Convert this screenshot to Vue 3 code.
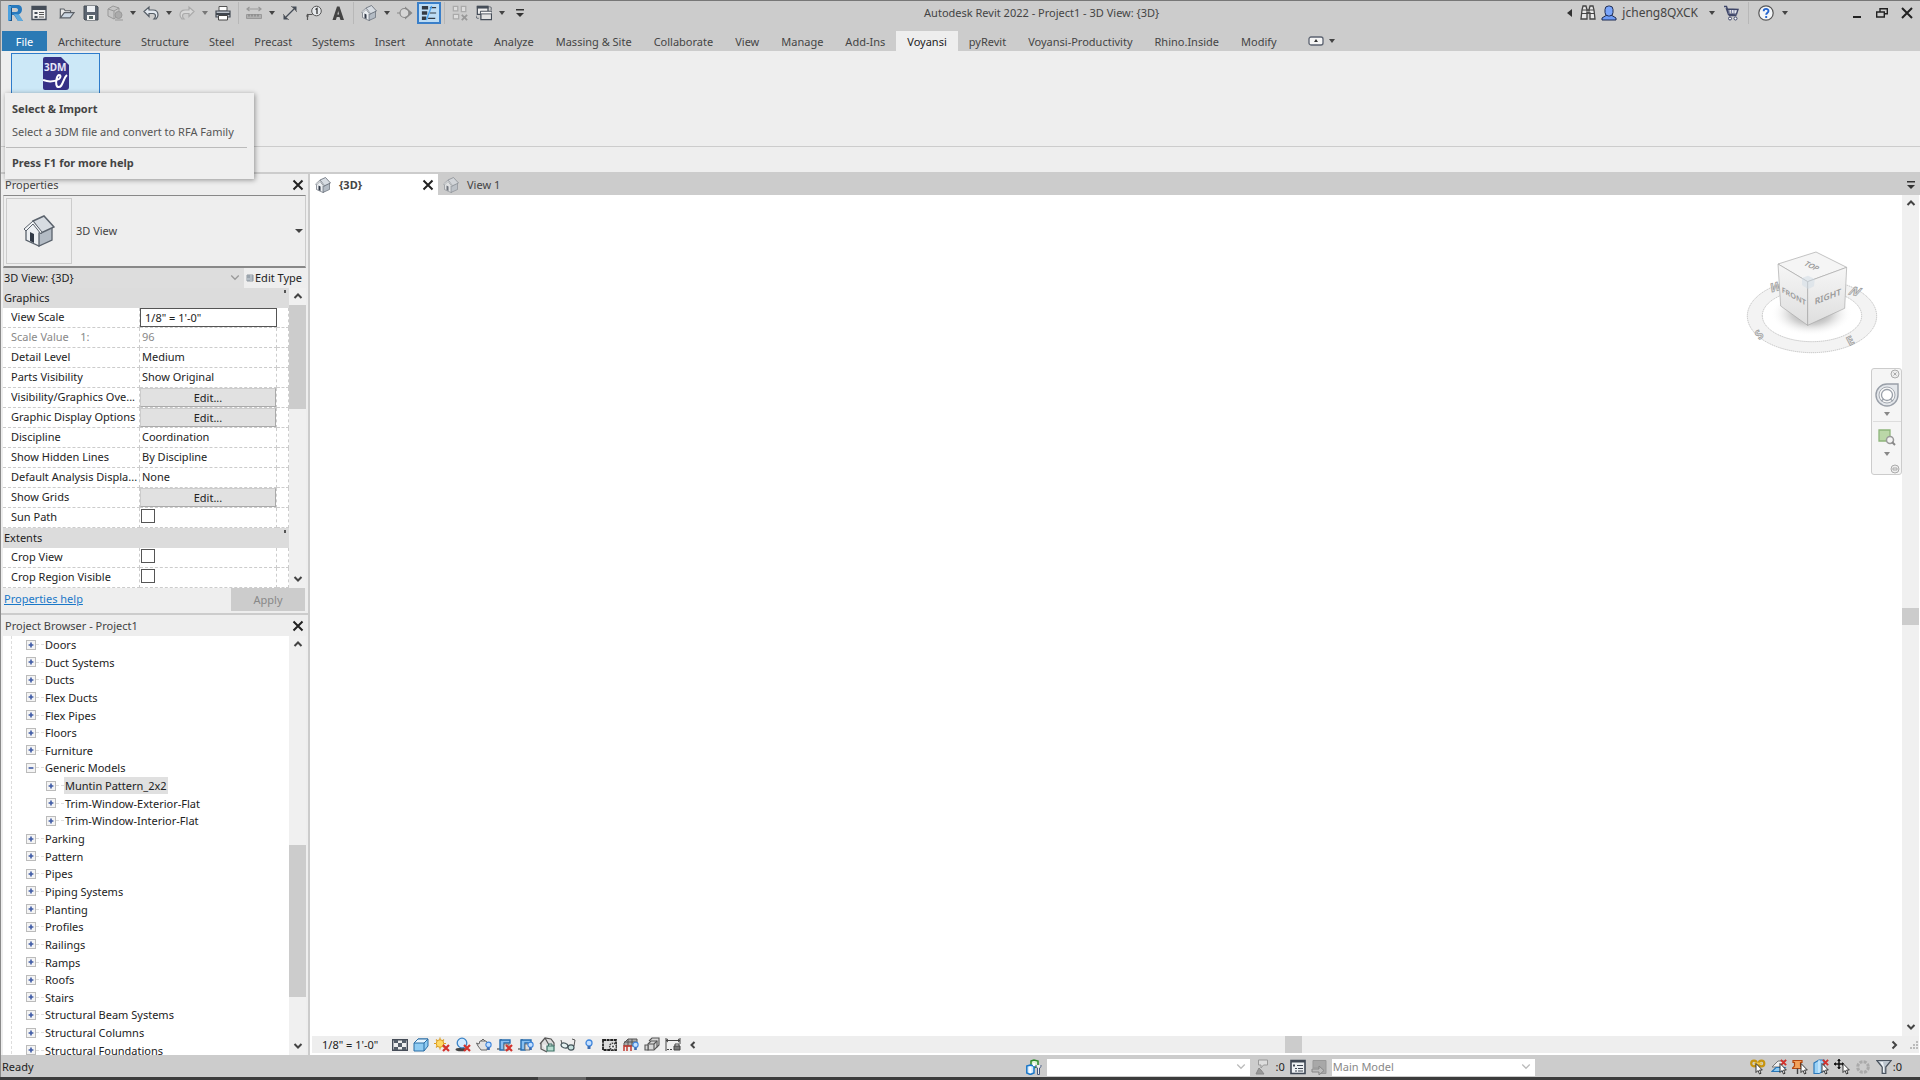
<script setup>
import { ref } from 'vue'

const activeTab = ref('Voyansi')
const instance = ref('3D View: {3D}')
const workset = ref('')
const option = ref('Main Model')
const selectedNode = ref('Muntin Pattern_2x2')

const tabs = [
  'Architecture', 'Structure', 'Steel', 'Precast', 'Systems', 'Insert', 'Annotate', 'Analyze',
  'Massing & Site', 'Collaborate', 'View', 'Manage', 'Add-Ins', 'Voyansi', 'pyRevit',
  'Voyansi-Productivity', 'Rhino.Inside', 'Modify'
]

const groups = ref([
  {
    name: 'Graphics',
    rows: [
      { id: 'scale', label: 'View Scale', type: 'input', value: '1/8" = 1\'-0"' },
      { id: 'scale-value', label: 'Scale Value    1:', type: 'text', value: '96', muted: true },
      { id: 'detail', label: 'Detail Level', type: 'text', value: 'Medium' },
      { id: 'parts', label: 'Parts Visibility', type: 'text', value: 'Show Original' },
      { id: 'vg', label: 'Visibility/Graphics Ove...', type: 'button', value: 'Edit...' },
      { id: 'gdo', label: 'Graphic Display Options', type: 'button', value: 'Edit...' },
      { id: 'discipline', label: 'Discipline', type: 'text', value: 'Coordination' },
      { id: 'hidden', label: 'Show Hidden Lines', type: 'text', value: 'By Discipline' },
      { id: 'analysis', label: 'Default Analysis Displa...', type: 'text', value: 'None' },
      { id: 'grids', label: 'Show Grids', type: 'button', value: 'Edit...' },
      { id: 'sun', label: 'Sun Path', type: 'check', value: false }
    ]
  },
  {
    name: 'Extents',
    rows: [
      { id: 'crop', label: 'Crop View', type: 'check', value: false },
      { id: 'crop-region', label: 'Crop Region Visible', type: 'check', value: false }
    ]
  }
])

const tree = [
  { name: 'Doors' }, { name: 'Duct Systems' }, { name: 'Ducts' }, { name: 'Flex Ducts' },
  { name: 'Flex Pipes' }, { name: 'Floors' }, { name: 'Furniture' },
  { name: 'Generic Models', open: true },
  { name: 'Muntin Pattern_2x2', child: true },
  { name: 'Trim-Window-Exterior-Flat', child: true },
  { name: 'Trim-Window-Interior-Flat', child: true },
  { name: 'Parking' }, { name: 'Pattern' }, { name: 'Pipes' }, { name: 'Piping Systems' },
  { name: 'Planting' }, { name: 'Profiles' }, { name: 'Railings' }, { name: 'Ramps' },
  { name: 'Roofs' }, { name: 'Stairs' }, { name: 'Structural Beam Systems' },
  { name: 'Structural Columns' }, { name: 'Structural Foundations' }
]

const quickTools = [
  'revit', 'recent', 'gap', 'open', 'save', 'sync', 'drop', 'undo', 'drop', 'redo', 'drop-dim', 'print', 'sep',
  'measure', 'drop', 'dimension', 'tag', 'text', 'sep', 'house', 'drop', 'section', 'thin', 'sep',
  'close-hidden', 'switch', 'drop', 'customize'
]
const viewTools = [
  'detail', 'style', 'sun', 'shadow', 'render', 'crop-off', 'crop-show', 'lock', 'glasses', 'bulb',
  'properties', 'analytic', 'displace', 'constraint'
]
const selectTools = ['sel-link', 'sel-underlay', 'sel-pin', 'sel-face', 'sel-drag', 'busy', 'filter']
</script>

<template>
  <svg class="defs" aria-hidden="true">
    <defs>
      <linearGradient id="cubeShade" x1="0" y1="0" x2="0" y2="1">
        <stop offset="0" stop-color="#f6f6f6" /><stop offset="1" stop-color="#dedede" />
      </linearGradient>
      <radialGradient id="floorShade">
        <stop offset="0" stop-color="#777" stop-opacity=".9" /><stop offset=".5" stop-color="#aaa" stop-opacity=".55" /><stop offset="1" stop-color="#fff" stop-opacity="0" />
      </radialGradient>
      <symbol id="cursor" viewBox="0 0 8 12"><path d="M1 .5v9l2-2 1.500 3.500 1.500-.7L4.600 7H7.300z" fill="#fff" stroke="#222" stroke-width=".9" /></symbol>
      <symbol id="redx" viewBox="0 0 8 8"><path d="M1 1l6 6M7 1L1 7" stroke="#d3322c" stroke-width="2.200" /></symbol>
      <symbol id="blueBulb" viewBox="0 0 8 12"><circle cx="4" cy="4" r="3" fill="#c4e0ff" stroke="#3f86dd" stroke-width="1.300" /><path d="M2.500 7h3v3h-3z" fill="#3a6bb0" /></symbol>

      <symbol id="i-revit" viewBox="0 0 16 18"><path d="M2 1h3v16H2z" fill="#174f86" /><path d="M4 1h6c4 0 5 2 5 4.500S13.500 10 11.500 10.500L16 17h-5L7 11H5V8h4c1.500 0 2-1 2-2s-.8-2-2-2H4z" fill="#2879bd" /><path d="M1 1l3 1v14l-3 1z" fill="#4aa0df" /><path d="M7 10l5 .5L16 17h-5z" fill="#5ea9dc" /></symbol>
      <symbol id="i-recent" viewBox="0 0 16 16"><path d="M1 1.500h14v13H1z" fill="#f2f2f2" stroke="#454d58" stroke-width="1.300" /><path d="M1 1h14v4H1z" fill="#454d58" /><path d="M3.500 7h3v2h-3zM3.500 11h3v2h-3z" fill="#454d58" /><path d="M8 7.500h5M8 9.500h5M8 12h5" stroke="#555" /></symbol>
      <symbol id="i-open" viewBox="0 0 18 16"><path d="M1.500 13.500V3.500h4l1.500 2h6v3" fill="#e9e9e9" stroke="#5b6067" stroke-width="1.300" /><path d="M1.500 13.500L6 7.500h11l-4.500 6z" fill="#ccd7e3" stroke="#5b6067" stroke-width="1.300" /></symbol>
      <symbol id="i-save" viewBox="0 0 16 16"><path d="M1 1h13l1 1v13H2l-1-1z" fill="#5b6470" stroke="#454c55" /><path d="M4 1h8v6H4z" fill="#edf0f3" /><path d="M4 10h8v5H4z" fill="#f7f7f7" /><path d="M6 11h4v3H6z" fill="#566" /></symbol>
      <symbol id="i-sync" viewBox="0 0 16 16"><g stroke="#999" fill="#c6c6c6"><path d="M1 4l5-3 6 2v7l-5 4-6-3z" /><path d="M1 4l6 2 5-3M7 6v8" fill="none" /><circle cx="11.500" cy="10" r="3.500" fill="#ababab" /><path d="M8 15h8" /></g></symbol>
      <symbol id="i-undo" viewBox="0 0 16 16"><path d="M1 6.500L6 2v3h4c4 0 5 3 5 5s-1 3-2 4h-2c1-1 1.500-2 1.500-3S12 8.500 10 8.500H6v3z" fill="#e4eaf1" stroke="#555d66" stroke-width="1.200" /></symbol>
      <symbol id="i-redo" viewBox="0 0 16 16"><path d="M15 6.500L10 2v3H6c-4 0-5 3-5 5s1 3 2 4h2c-1-1-1.500-2-1.500-3S4 8.500 6 8.500h4v3z" fill="#d8d8d8" stroke="#aaa" stroke-width="1.200" /></symbol>
      <symbol id="i-print" viewBox="0 0 16 16"><path d="M4 1.500h8V6H4z" fill="#fff" stroke="#555" /><path d="M1 6h14v6H1z" fill="#b8bec6" stroke="#444b54" stroke-width="1.200" /><path d="M1 9h14" stroke="#3f454d" stroke-width="2" /><path d="M3.500 10.500h9v4.500h-9z" fill="#fff" stroke="#444" /></symbol>
      <symbol id="i-measure" viewBox="0 0 16 16"><path d="M1 4h14M3.500 2L1 4l2.500 2M12.500 2L15 4l-2.500 2" fill="none" stroke="#999" stroke-width="1.200" /><path d="M.5 9.500h15v4H.5z" fill="#b0b0b0" stroke="#999" /><path d="M3 9.500v2M6 9.500v2M9 9.500v2M12 9.500v2" stroke="#777" /></symbol>
      <symbol id="i-dimension" viewBox="0 0 16 16"><path d="M3 13L13 3" stroke="#454d58" stroke-width="1.300" /><path d="M1.500 14.500v-5l5 5zM14.500 1.500v5l-5-5z" fill="#454d58" /><path d="M1 9l6 6M9 1l6 6" stroke="#777" /></symbol>
      <symbol id="i-tag" viewBox="0 0 16 16"><path d="M1.500 15V9.500h5" fill="none" stroke="#555" stroke-width="1.200" /><path d="M0 11.500l1.500-3 1.500 3z" fill="#555" /><circle cx="10.500" cy="6" r="4.800" fill="#e6e9ec" stroke="#555" /><path d="M9.500 4.500l1.500-1V9" fill="none" stroke="#333" stroke-width="1.300" /></symbol>
      <symbol id="i-text" viewBox="0 0 16 16"><path d="M2.500 15L7 1.500h2.500L14 15h-3.500l-1-3H6.800l-1 3zM7.400 9.500h1.700L8.200 6z" fill="#444" fill-rule="evenodd" /></symbol>
      <symbol id="i-house" viewBox="0 0 32 32"><path d="M3 14l8-8 8 10v13l-3 2-13-6z" fill="#eceff2" stroke="#5a626c" stroke-width="1.300" /><path d="M16 18l13-6v13l-13 6z" fill="#b3bbc4" stroke="#5a626c" stroke-width="1.300" /><path d="M10 6l11-5 10 11-13 6z" fill="#d7dce2" stroke="#5a626c" stroke-width="1.500" /><path d="M10 6L1 14l2 2 7-7 8 10 1-2z" fill="#f3f5f7" stroke="#5a626c" /><path d="M7 17l4 2v9l-4-2z" fill="#313946" /></symbol>
      <symbol id="i-section" viewBox="0 0 16 16"><circle cx="7.500" cy="8" r="4.500" fill="#d6d6d6" stroke="#888" stroke-width="1.200" /><path d="M8 1.500L15.500 8 8 14.500V12c5-2 5-6 0-8z" fill="#888" /><path d="M0 8h3" stroke="#888" /></symbol>
      <symbol id="i-thin" viewBox="0 0 18 18"><path d="M1 3h7M1 9h6M1 15h5" stroke="#323a44" stroke-width="4" /><path d="M10 3h7M10 9h7M8 15h8" stroke="#323a44" stroke-width="1.300" /><path d="M12 1L6 17" stroke="#4ba3f0" stroke-width="1.600" /></symbol>
      <symbol id="i-close-hidden" viewBox="0 0 18 18"><path d="M1.500 1.500h5v5h-5zM10.500 1.500h5v6h-5zM1.500 10.500h6v5h-6z" fill="#ddd" stroke="#aaa" stroke-width="1.400" /><path d="M11 11l6 6M17 11l-6 6" stroke="#999" stroke-width="2" /></symbol>
      <symbol id="i-switch" viewBox="0 0 18 18"><path d="M1.500 1.500h12v9h-12z" fill="#eee" stroke="#454d58" stroke-width="1.400" /><path d="M1 1h13v3H1z" fill="#454d58" /><path d="M5.500 7.500h12v9h-12z" fill="#e2e2e2" stroke="#454d58" stroke-width="1.400" /><path d="M5 7h13v3H5z" fill="#f7f7f7" stroke="#454d58" /><path d="M15 2c3 0 2 2 2 4M0 12c0 3 1 3 3 3" fill="none" stroke="#454d58" /></symbol>
      <symbol id="i-customize" viewBox="0 0 10 10"><path d="M1 1h8v1.500H1zM1 5h8L5 9z" fill="#333" /></symbol>

      <symbol id="i-detail" viewBox="0 0 16 14"><path d="M.7 1.700h14.600v10.600H.7z" fill="#eee" stroke="#454c57" stroke-width="1.400" /><path d="M2 2h4v3H2zM10 2h4v3h-4zM6 5h4v4H6zM2 9h4v3H2zM10 9h4v3h-4z" fill="#545d68" /></symbol>
      <symbol id="i-style" viewBox="0 0 16 16"><path d="M1 6l4-4h10v7l-4 5H1z" fill="#8fccf3" stroke="#2a6ea6" /><path d="M1 6l4-4h10l-4 4z" fill="#e6f5ff" stroke="#2a6ea6" /><path d="M11 6v8" stroke="#2a6ea6" /></symbol>
      <symbol id="i-sun" viewBox="0 0 16 16"><path d="M6 .5v12M0 6.500h12M2 2.500l8 8M10 2.500l-8 8" stroke="#db9c22" stroke-width="1.100" /><circle cx="6" cy="6.500" r="3.800" fill="#ffd964" stroke="#db9c22" /><use href="#redx" x="8" y="7" width="8" height="8" /></symbol>
      <symbol id="i-shadow" viewBox="0 0 16 16"><ellipse cx="6" cy="12.500" rx="5.500" ry="1.800" fill="#444" /><circle cx="7" cy="6" r="4.800" fill="#d2eaff" stroke="#3b83c6" stroke-width="1.300" /><use href="#redx" x="8" y="7" width="8" height="8" /></symbol>
      <symbol id="i-render" viewBox="0 0 16 16"><path d="M4 4h6l2 3-1 6H5L2 9 .5 6 3 7z" fill="#e2e2e2" stroke="#666" /><path d="M5 4l2-2 2 2" fill="none" stroke="#666" /><use href="#blueBulb" x="9" y="4" width="7" height="11" /></symbol>
      <symbol id="i-crop-off" viewBox="0 0 16 16"><path d="M0 12h4M4 2v2" fill="none" stroke="#333" /><path d="M3 3h10v3H7v7H3z" fill="#88bff0" stroke="#246cb0" stroke-width="1.400" /><path d="M7 7h5v6H7z" fill="#ddd" stroke="#777" /><use href="#redx" x="8" y="7" width="8" height="8" /></symbol>
      <symbol id="i-crop-show" viewBox="0 0 16 16"><path d="M0 12h4M4 2v2" fill="none" stroke="#333" /><path d="M3 3h10v3H7v7H3z" fill="#88bff0" stroke="#246cb0" stroke-width="1.400" /><path d="M7 7h5v6H7z" fill="#ddd" stroke="#777" /><use href="#blueBulb" x="9" y="4" width="7" height="11" /></symbol>
      <symbol id="i-lock" viewBox="0 0 16 16"><path d="M1 7l5-6 6 1 3 4v3M2 6v6l6 3M6 1l4 7" fill="#ddd" stroke="#555" stroke-width="1.200" /><path d="M8 9h7v5H8z" fill="#b7ddd0" stroke="#3b7064" stroke-width="1.200" /><path d="M9.500 9V7h3.500v2" fill="none" stroke="#3b7064" /></symbol>
      <symbol id="i-glasses" viewBox="0 0 16 16"><path d="M1 3l1 4M12 2l3 1-1 6" fill="none" stroke="#555" /><ellipse cx="4.500" cy="8.500" rx="3.500" ry="2.400" fill="#e5f1f1" stroke="#45545a" stroke-width="1.200" transform="rotate(20 4.500 8.500)" /><ellipse cx="11" cy="10.500" rx="3" ry="2.600" fill="#c8e2e0" stroke="#45545a" stroke-width="1.200" /></symbol>
      <symbol id="i-bulb" viewBox="0 0 16 16"><use href="#blueBulb" x="4" y="2" width="8" height="12" /></symbol>
      <symbol id="i-properties" viewBox="0 0 16 16"><path d="M1 3h13v10H1z" fill="#ddd" stroke="#222" stroke-width="1.800" stroke-dasharray="3 .6" /><circle cx="11" cy="9.500" r="3.300" fill="#eee" stroke="#444" stroke-width="1.500" stroke-dasharray="1.500 .8" /><circle cx="11" cy="9.500" r="1" fill="#444" /></symbol>
      <symbol id="i-analytic" viewBox="0 0 16 16"><path d="M1 6l4-4h9v4l-3 3H1z" fill="#aaa" stroke="#555" /><path d="M1 5h12M5 2v7M9 2v7" stroke="#555" /><path d="M1 14V9h7v5M4 14V9" fill="none" stroke="#c2382f" stroke-width="1.500" /><use href="#blueBulb" x="9" y="4" width="7" height="11" /></symbol>
      <symbol id="i-displace" viewBox="0 0 16 16"><g fill="#d8d8d8" stroke="#555" stroke-width="1.100"><path d="M5 4l3-3h7v7l-2 2" /><path d="M4 7l3-3h6v6l-3 3H4z" /><path d="M4 7h6v6M10 7l3-3" /><path d="M1 8h3v5H1z" /></g></symbol>
      <symbol id="i-constraint" viewBox="0 0 16 16"><path d="M1 1v13M15 1v6M1 3.500h14M3 2L1 3.500 3 5M13 2l2 1.500L13 5" fill="none" stroke="#444" /><path d="M2 12.500h6" stroke="#444" stroke-dasharray="2 1" /><path d="M9 9h6v4H9z" fill="#777" stroke="#444" /><path d="M10 9V7h4v2" fill="none" stroke="#444" /></symbol>

      <symbol id="i-sel-link" viewBox="0 0 16 16"><circle cx="4" cy="4.500" r="2.800" fill="none" stroke="#c7940f" stroke-width="2.200" /><circle cx="11.500" cy="4.500" r="2.800" fill="none" stroke="#c7940f" stroke-width="2.200" /><path d="M4 4.500h8" stroke="#f3c845" stroke-width="1.800" /><use href="#cursor" x="5" y="4" width="8" height="12" /></symbol>
      <symbol id="i-sel-underlay" viewBox="0 0 16 16"><path d="M1 8l6-6h7l-5 6z" fill="#eee" stroke="#777" /><path d="M1 12.500l4-4h9l-4 4z" fill="#8fccf3" stroke="#2876b7" stroke-width="1.200" /><use href="#redx" x="9" y="0" width="7" height="7" /><use href="#cursor" x="8" y="4" width="8" height="12" /></symbol>
      <symbol id="i-sel-pin" viewBox="0 0 16 16"><path d="M1 1.500h9v2H8.500V7L11 9.500H0L2.500 7V3.500H1z" fill="#f2a25b" stroke="#b3470f" stroke-width="1.200" /><path d="M5.500 9.500V15" stroke="#444" stroke-width="1.400" /><use href="#cursor" x="8" y="4" width="8" height="12" /></symbol>
      <symbol id="i-sel-face" viewBox="0 0 16 16"><path d="M1 4l5-3h5v11l-5 2.500H1z" fill="#9bd2f6" stroke="#2a78ba" stroke-width="1.200" /><path d="M6 1v13" stroke="#e6f5ff" /><use href="#redx" x="9" y="0" width="7" height="7" /><use href="#cursor" x="8" y="4" width="8" height="12" /></symbol>
      <symbol id="i-sel-drag" viewBox="0 0 16 16"><path d="M5 0v10M0 5h10" stroke="#111" stroke-width="1.500" /><path d="M3 2l2-2 2 2zM3 8l2 2 2-2zM2 3L0 5l2 2zM8 3l2 2-2 2z" fill="#111" /><use href="#cursor" x="8" y="4" width="8" height="12" /></symbol>
      <symbol id="i-busy" viewBox="0 0 16 16"><circle cx="8" cy="8" r="5.300" fill="none" stroke="#aaa" stroke-width="3" stroke-dasharray="3 1.160" /></symbol>
      <symbol id="i-filter" viewBox="0 0 16 16"><path d="M.8 1.500h14.400L9.800 8v6.500H6.200V8z" fill="#bcc5ce" stroke="#49525d" stroke-width="1.200" /><path d="M4 3h3l1 5v5H7V8z" fill="#eef2f6" /></symbol>
      <symbol id="i-worksets" viewBox="0 0 16 16"><path d="M5 2l3-1 4 1v5l-4 2-3-2z" fill="#dff3d8" stroke="#2d8a2a" stroke-width="1.500" /><path d="M.8 7l3.500-1L8 7v7l-3.700 1.500L.8 14z" fill="#cfe9ff" stroke="#1d78c8" stroke-width="1.500" /><path d="M4.300 8v6M8 4v3" stroke="#fff" stroke-width="2" /><path d="M10 6c0 2 .5 3 1.500 3v6.500h2V9C14.500 9 15 8 15 6" fill="#eee" stroke="#465a80" /></symbol>
      <symbol id="i-editreq" viewBox="0 0 16 16"><path d="M3.500 1h9v5h-4L6 9V6H3.500z" fill="#ddd" stroke="#999" /><path d="M1 15l2-4 1-2 2 2 3 4z" fill="#999" stroke="#888" /></symbol>
      <symbol id="i-options" viewBox="0 0 16 16"><path d="M1 1.500h14v13H1z" fill="#eef1f4" stroke="#3f4855" stroke-width="1.600" /><path d="M1 1h14v2.500H1z" fill="#3f4855" /><path d="M3 5.500h2v2H3zM5 9h2v1H5zM5 11.500h2v1H5zM7 6h6v1H7zM8 9h5v1H8zM8 11.500h5v1H8z" fill="#3f4855" /></symbol>
      <symbol id="i-addset" viewBox="0 0 16 16"><path d="M2 1.500h13v13H8V9H2z" fill="#a8a8a8" stroke="#999" /><path d="M1 10h7V7l5 4.500L8 16v-3H1z" fill="#bdbdbd" stroke="#888" /></symbol>
    </defs>
  </svg>

  <div class="app">
    <header class="titlebar">
      <div class="quick">
        <template v-for="(tool, i) in quickTools" :key="i">
          <span v-if="tool === 'sep'" class="sep"></span>
          <span v-else-if="tool === 'gap'" class="gap"></span>
          <button v-else-if="tool.startsWith('drop')" class="drop" :class="{ dim: tool === 'drop-dim' }" aria-label="More"></button>
          <button v-else class="tool" :class="{ on: tool === 'thin' }" :aria-label="tool">
            <svg :class="{ small: tool === 'customize', large: tool === 'revit' }"><use :href="'#i-' + tool" /></svg>
          </button>
        </template>
      </div>
      <div class="title">Autodesk Revit 2022 - Project1 - 3D View: {3D}</div>
      <div class="account">
        <button class="back" aria-label="Collapse"></button>
        <button class="tool" aria-label="Search">
          <svg viewBox="0 0 16 16"><path d="M2 5l1-4h3l1 4h2l1-4h3l1 4 1 9h-5V8H7v6H1z" fill="#e8e8e8" stroke="#444" stroke-width="1.300" /><path d="M1.500 8.500H7M9.500 8.500H15M7 5v3h2V5M2 5h5M9 5h5" fill="none" stroke="#444" /></svg>
        </button>
        <button class="user">
          <svg viewBox="0 0 16 16"><path d="M1 15v-2l4-2.500h6l4 2.500v2z" fill="#6e9bf5" stroke="#1d2b52" /><rect x="4" y="1" width="8" height="10" rx="3.500" fill="#7aa5fa" stroke="#1d2b52" /></svg>
          jcheng8QXCK
        </button>
        <button class="drop" aria-label="Account menu"></button>
        <button class="tool" aria-label="App store">
          <svg viewBox="0 0 16 16"><path d="M1 1.500h2.500l3 9h7M3.500 4L15 4.500l-1.500 4.500-8 .5z" fill="#e4e6ef" stroke="#3f4668" stroke-width="1.400" /><path d="M6 5v4M8.500 5v4M11 5v4" stroke="#7b81a0" /><circle cx="7" cy="13.500" r="1.500" fill="#fff" stroke="#3f4668" /><circle cx="12.500" cy="13.500" r="1.500" fill="#fff" stroke="#3f4668" /></svg>
        </button>
        <span class="sep"></span>
        <button class="tool" aria-label="Help">
          <svg viewBox="0 0 16 16"><circle cx="8" cy="8" r="7.200" fill="#f4f6f8" stroke="#555" stroke-width="1.200" /><path d="M5.700 6.200c0-3 4.800-3 4.800-.2 0 1.700-2.300 1.700-2.300 3.700M8.200 11v2" fill="none" stroke="#2465cf" stroke-width="1.900" /></svg>
        </button>
        <button class="drop" aria-label="Help menu"></button>
        <div class="window">
          <button aria-label="Minimize"><svg viewBox="0 0 12 12"><path d="M2 10h8" stroke="#222" stroke-width="2" /></svg></button>
          <button aria-label="Restore"><svg viewBox="0 0 12 12"><path d="M.7 5h7.600v5H.7zM4 5V1.700h7.300v5H8.500" fill="none" stroke="#222" stroke-width="1.400" /></svg></button>
          <button aria-label="Close"><svg viewBox="0 0 12 12"><path d="M1 1l10 10M11 1L1 11" stroke="#222" stroke-width="2" /></svg></button>
        </div>
      </div>
    </header>

    <nav class="tabs">
      <button class="file">File</button>
      <button v-for="tab in tabs" :key="tab" :class="{ active: tab === activeTab }" @click="activeTab = tab">{{ tab }}</button>
      <button class="collapse" aria-label="Minimize ribbon">
        <svg viewBox="0 0 16 10"><rect x="1" y="1" width="14" height="8" rx="2" fill="#f5f5f5" stroke="#5b6270" stroke-width="1.300" /><path d="M8 3l2 3H6z" fill="#333" /></svg>
      </button>
      <span class="drop"></span>
    </nav>

    <section class="ribbon">
      <div class="panel">
        <button class="import" aria-label="Select &amp; Import">
          <svg viewBox="0 0 26 33">
            <path d="M2 0h16l8 8v22a3 3 0 0 1-3 3H2a2 2 0 0 1-2-2V2a2 2 0 0 1 2-2z" fill="#353086" />
            <text x="1" y="14">3DM</text>
            <path d="M0 23c5 2 11 2 16-1 2-2 2-4 0-4-3 1-4 11-1 12 5 1 5-9 9-12" fill="none" stroke="#fff" stroke-width="2" />
          </svg>
        </button>
        <div class="tooltip" role="tooltip">
          <strong>Select &amp; Import</strong>
          <p>Select a 3DM file and convert to RFA Family</p>
          <strong class="f1">Press F1 for more help</strong>
        </div>
      </div>
    </section>

    <main class="work">
      <aside class="side">
        <section class="props">
          <h2>Properties <button class="x" aria-label="Close properties"><svg viewBox="0 0 12 12"><path d="M1.500 1.500l9 9M10.500 1.500l-9 9" /></svg></button></h2>
          <div class="type">
            <div class="thumbnail"><svg><use href="#i-house" /></svg></div>
            <span>3D View</span>
            <button class="drop" aria-label="Choose type"></button>
          </div>
          <div class="instance">
            <label class="picker">
              <select v-model="instance" aria-label="Instance"><option>3D View: {3D}</option></select>
              <svg viewBox="0 0 8 8"><path d="M1 2l3 3 3-3" /></svg>
            </label>
            <button class="edit-type">
              <svg viewBox="0 0 8 8"><path d="M1 1h6v6H1zM1 3h6M3 1v6M4 5h3" fill="#dde4ec" stroke="#77808c" stroke-width=".8" /></svg>Edit Type
            </button>
          </div>
          <div class="grid">
            <table>
              <colgroup><col class="c-name" /><col class="c-value" /><col /></colgroup>
              <tbody v-for="group in groups" :key="group.name">
                <tr class="group"><th colspan="3">{{ group.name }}<i></i></th></tr>
                <tr v-for="row in group.rows" :key="row.id" :class="{ muted: row.muted }">
                  <td><label :for="row.id">{{ row.label }}</label></td>
                  <td>
                    <input v-if="row.type === 'input'" :id="row.id" v-model="row.value" type="text" />
                    <button v-else-if="row.type === 'button'" :id="row.id" class="edit">{{ row.value }}</button>
                    <input v-else-if="row.type === 'check'" :id="row.id" v-model="row.value" type="checkbox" />
                    <output v-else :id="row.id">{{ row.value }}</output>
                  </td>
                  <td></td>
                </tr>
              </tbody>
            </table>
            <div class="vscroll">
              <svg viewBox="0 0 10 10"><path d="M1.500 7L5 3.500 8.500 7" /></svg>
              <div class="rail"><div class="thumb first"></div></div>
              <svg viewBox="0 0 10 10"><path d="M1.500 3L5 6.500 8.500 3" /></svg>
            </div>
          </div>
          <div class="apply">
            <a href="#">Properties help</a>
            <button disabled>Apply</button>
          </div>
        </section>

        <section class="browser">
          <h2>Project Browser - Project1 <button class="x" aria-label="Close browser"><svg viewBox="0 0 12 12"><path d="M1.500 1.500l9 9M10.500 1.500l-9 9" /></svg></button></h2>
          <div class="tree">
            <ul>
              <li v-for="node in tree" :key="node.name" :class="{ child: node.child }">
                <button class="toggle" :aria-label="'Expand ' + node.name">
                  <svg viewBox="0 0 10 10"><path :d="node.open ? 'M2 5h6' : 'M2 5h6M5 2v6'" /></svg>
                </button>
                <span class="name" :class="{ selected: node.name === selectedNode }" @click="selectedNode = node.name">{{ node.name }}</span>
              </li>
            </ul>
            <div class="vscroll">
              <svg viewBox="0 0 10 10"><path d="M1.500 7L5 3.500 8.500 7" /></svg>
              <div class="rail"><div class="thumb second"></div></div>
              <svg viewBox="0 0 10 10"><path d="M1.500 3L5 6.500 8.500 3" /></svg>
            </div>
          </div>
        </section>
      </aside>

      <section class="view">
        <div class="doc-tabs">
          <div class="doc active">
            <svg><use href="#i-house" /></svg><b>{3D}</b>
            <button class="x" aria-label="Close view"><svg viewBox="0 0 12 12"><path d="M1.500 1.500l9 9M10.500 1.500l-9 9" /></svg></button>
          </div>
          <div class="doc"><svg><use href="#i-house" /></svg>View 1</div>
          <button class="list" aria-label="Views"><svg><use href="#i-customize" /></svg></button>
        </div>
        <div class="stage">
          <div class="canvas">
            <svg class="cube" viewBox="78 240 396 312">
              <path d="M82 438a194 110 0 1 0 388 0a194 110 0 1 0-388 0zM127 437a149 78 0 1 0 298 0a149 78 0 1 0-298 0z" fill="#f3f3f3" fill-rule="evenodd" stroke="#aaa" stroke-width="2" stroke-dasharray="4 2" />
              <g class="compass">
                <text transform="translate(150 368) rotate(-15) skewX(-20)">W</text>
                <text transform="translate(382 372) rotate(12) skewX(-30)">N</text>
                <text transform="translate(118 510) rotate(-40)">S</text>
                <text transform="translate(388 528) rotate(-28)">E</text>
              </g>
              <ellipse cx="274" cy="430" rx="122" ry="68" fill="url(#floorShade)" />
              <g stroke="#a8a8a8" stroke-width="2">
                <path d="M288 246l92 46-117 43-89-53z" fill="#f5f5f5" />
                <path d="M174 282l89 53v131l-81-58z" fill="url(#cubeShade)" />
                <path d="M263 335l117-43-6 123-111 51z" fill="url(#cubeShade)" />
              </g>
              <path d="M246 324l18-7 20 10-2 22-18 8-18-12z" fill="#cfdbe6" opacity=".5" />
              <text transform="translate(185 366) skewY(29)" font-size="22" class="face">FRONT</text>
              <text transform="translate(284 404) skewY(-21)" font-size="26" class="face">RIGHT</text>
              <text transform="translate(250 284) rotate(27) skewX(-22)" font-size="22" class="face">TOP</text>
            </svg>
            <div class="navbar">
              <svg class="dot" viewBox="0 0 10 10"><circle cx="5" cy="5" r="4" /><path d="M3.500 3.500l3 3M6.500 3.500l-3 3" /></svg>
              <button aria-label="Steering wheel">
                <svg viewBox="0 0 24 24"><path d="M12 1h11v11a11 11 0 1 1-11-11z" fill="#e4e7eb" stroke="#999fa8" stroke-width="1.400" /><circle cx="12" cy="12" r="8" fill="#f8f8f8" stroke="#a4a9b1" /><circle cx="12" cy="12" r="5.500" fill="#fff" stroke="#999fa8" stroke-width="1.300" /><path d="M6 18l3-2M18 18l-3-2" stroke="#999fa8" stroke-width="1.400" /></svg>
              </button>
              <span class="drop"></span>
              <hr />
              <button aria-label="Zoom">
                <svg viewBox="0 0 24 24"><path d="M4 6h11v11H4z" fill="#bbd7a8" stroke="#8eb57b" stroke-width="1.300" /><circle cx="15" cy="16" r="3.500" fill="#f4f4f4" stroke="#999" stroke-width="1.500" /><path d="M17 18l3 3" stroke="#888" stroke-width="2" /></svg>
              </button>
              <span class="drop"></span>
              <svg class="dot" viewBox="0 0 10 10"><circle cx="5" cy="5" r="4" /><path d="M3 4h4v2H3z" /></svg>
            </div>
          </div>
          <div class="vscroll">
            <svg viewBox="0 0 10 10"><path d="M1.500 7L5 3.500 8.500 7" /></svg>
            <div class="rail"><div class="thumb middle"></div></div>
            <svg viewBox="0 0 10 10"><path d="M1.500 3L5 6.500 8.500 3" /></svg>
          </div>
        </div>
        <div class="view-bar">
          <button class="scale">1/8" = 1'-0"</button>
          <button v-for="tool in viewTools" :key="tool" class="mini" :aria-label="tool"><svg><use :href="'#i-' + tool" /></svg></button>
          <svg class="chev first-chev" viewBox="0 0 10 10"><path d="M6.500 2L3.500 5l3 3" /></svg>
          <div class="hrail"><div class="hthumb"></div></div>
          <svg class="chev" viewBox="0 0 10 10"><path d="M3.500 1.500L7 5 3.500 8.500" /></svg>
          <svg class="grip" viewBox="0 0 10 10"><path d="M7 1h2v2H7zM4 4h2v2H4zM7 4h2v2H7zM1 7h2v2H1zM4 7h2v2H4zM7 7h2v2H7z" fill="#bbb" /></svg>
        </div>
      </section>
    </main>

    <footer class="status">
      <span class="ready">Ready</span>
      <div class="worksets">
        <svg class="ico"><use href="#i-worksets" /></svg>
        <label class="picker">
          <select v-model="workset" aria-label="Active workset"><option></option></select>
          <svg viewBox="0 0 8 8"><path d="M1 2l3 3 3-3" /></svg>
        </label>
        <svg class="ico"><use href="#i-editreq" /></svg>
        <span class="count">:0</span>
        <svg class="ico"><use href="#i-options" /></svg>
        <svg class="ico"><use href="#i-addset" /></svg>
        <label class="picker">
          <select v-model="option" aria-label="Design option"><option>Main Model</option></select>
          <svg viewBox="0 0 8 8"><path d="M1 2l3 3 3-3" /></svg>
        </label>
      </div>
      <div class="selection">
        <button v-for="tool in selectTools" :key="tool" class="mini" :aria-label="tool"><svg><use :href="'#i-' + tool" /></svg></button>
        <span>:0</span>
      </div>
    </footer>
    <div class="taskbar"></div>
  </div>
</template>

<style>
body {
  margin: 0;
  overflow: hidden;
}
</style>

<style scoped>
* {
  box-sizing: border-box;
}

.defs {
  position: absolute;
  width: 0;
  height: 0;
}

.app {
  display: flex;
  flex-direction: column;
  height: 100vh;
  background: #eee;
  border-top: 1px solid #777;
  border-left: 1px solid #8a8a8a;
  font-family: "Noto Sans", "Open Sans", sans-serif;
  font-size: 11px;
  line-height: 16px;
  color: #222;
}

button {
  padding: 0;
  border: none;
  background: none;
  font: inherit;
  color: inherit;
}

svg {
  display: block;
  flex: none;
}

.titlebar {
  display: flex;
  align-items: center;
  height: 30px;
  padding: 0 0 6px 2px;
  background: #ccc;
  color: #444;
}

.quick,
.account,
.window {
  display: flex;
  align-items: center;
}

.tool {
  display: flex;
  align-items: center;
  justify-content: center;
  width: 24px;
  height: 22px;
}

.tool svg,
.user svg {
  width: 16px;
  height: 16px;
}

.tool svg.small {
  width: 10px;
  height: 10px;
}

.tool svg.large {
  height: 18px;
}

.tool.on {
  background: #bddcf4;
  border: 2px solid #3a7fc9;
}

.sep {
  width: 1px;
  height: 22px;
  margin: 0 3px;
  background: #b8b8b8;
}

.gap {
  width: 4px;
}

.drop {
  display: flex;
  align-items: center;
  justify-content: center;
  width: 12px;
  height: 16px;
}

.drop::after {
  content: "";
  border: 3px solid transparent;
  border-top: 4px solid #444;
  border-bottom: none;
}

.drop.dim::after {
  border-top-color: #777;
}

.title {
  flex: 1;
  padding-right: 12px;
  text-align: center;
  white-space: nowrap;
}

.back {
  width: 12px;
  height: 10px;
}

.back::after {
  content: "";
  display: block;
  width: 0;
  margin-left: 4px;
  border: 4px solid transparent;
  border-right: 5px solid #333;
  border-left: none;
}

.user {
  display: flex;
  align-items: center;
  gap: 5px;
  margin-right: 8px;
  font-size: 12px;
}

.account .tool {
  margin: 0 1px;
}

.account .sep {
  margin: 0 4px;
}

.window {
  gap: 13px;
  margin-left: 60px;
  padding-right: 7px;
}

.window svg {
  width: 12px;
  height: 12px;
}

.tabs {
  display: flex;
  align-items: center;
  height: 20px;
  padding-left: 1px;
  background: #ccc;
  color: #444;
}

.tabs button {
  height: 20px;
  padding: 1px 10px 0;
}

.tabs button:nth-child(n + 9) {
  padding: 1px 11px 0;
}

.tabs .file {
  width: 45px;
  margin-right: 1px;
  background: #2b7ab5;
  color: #fff;
}

.tabs .active {
  background: #eee;
  color: #222;
}

.tabs button.collapse {
  padding: 0 2px 0 20px;
}

.collapse svg {
  width: 16px;
  height: 10px;
}

.ribbon {
  height: 123px;
  border-bottom: 2px solid #ccc;
}

.panel {
  position: relative;
  height: 96px;
  padding: 2px 10px;
  border-bottom: 1px solid #ccc;
}

.import {
  display: flex;
  justify-content: center;
  width: 89px;
  height: 66px;
  padding-top: 3px;
  background: #cce8f7;
  border: 1px solid #2e7ccb;
}

.import svg {
  width: 26px;
  height: 33px;
}

.import text {
  font-size: 10px;
  font-weight: bold;
  fill: #e6e6f8;
}

.tooltip {
  position: absolute;
  left: 4px;
  top: 42px;
  z-index: 2;
  width: 249px;
  padding: 8px 7px;
  background: #efefef;
  box-shadow: 1px 1px 5px rgba(0, 0, 0, .4);
  color: #444;
}

.tooltip strong {
  display: block;
}

.tooltip p {
  margin: 7px 0;
  color: #555;
  white-space: nowrap;
}

.tooltip .f1 {
  margin-left: -6px;
  padding: 7px 0 0 6px;
  border-top: 1px solid #bbb;
}

.work {
  display: flex;
  flex: 1;
  min-height: 0;
}

.side {
  display: flex;
  flex-direction: column;
  width: 309px;
  padding: 0 2px;
  border-right: 2px solid #ccc;
}

h2 {
  display: flex;
  align-items: center;
  justify-content: space-between;
  height: 21px;
  margin: 0;
  padding: 0 2px;
  font-size: 11px;
  font-weight: normal;
  color: #444;
}

.x svg {
  width: 12px;
  height: 12px;
  fill: none;
  stroke: #222;
  stroke-width: 2;
}

.type {
  display: flex;
  align-items: center;
  gap: 4px;
  height: 73px;
  padding-left: 2px;
  border: 1px solid #ccc;
  border-top-color: #888;
  border-bottom: 2px solid #888;
}

.type span {
  flex: 1;
  color: #444;
}

.thumbnail {
  display: flex;
  align-items: center;
  justify-content: center;
  width: 66px;
  height: 66px;
  border: 1px solid #ccc;
}

.thumbnail svg {
  width: 32px;
  height: 32px;
}

.type .drop::after {
  border-width: 4px 4px 0;
}

.instance {
  display: flex;
  height: 20px;
}

.picker {
  display: flex;
  align-items: center;
  flex: 1;
  background: #ddd;
}

.picker select {
  flex: 1;
  height: 100%;
  padding: 0 0 0 1px;
  border: none;
  background: transparent;
  appearance: none;
  font: inherit;
  color: inherit;
}

.picker svg {
  width: 10px;
  height: 10px;
  margin: 0 4px;
  fill: none;
  stroke: #999;
}

.edit-type {
  display: flex;
  align-items: center;
  gap: 1px;
  width: 62px;
  padding-left: 2px;
  white-space: nowrap;
}

.edit-type svg {
  width: 8px;
  height: 8px;
}

.grid {
  display: flex;
  height: 300px;
}

table {
  flex: 1;
  width: 100%;
  table-layout: fixed;
  border-collapse: separate;
  border-spacing: 0;
  background: #fff;
}

.c-name,
.c-value {
  width: 137px;
}

tr {
  height: 20px;
}

th {
  padding: 0 0 0 1px;
  background: #dcdcdc;
  text-align: left;
  font-weight: normal;
}

th i {
  float: right;
  width: 2px;
  height: 3px;
  margin-right: 3px;
  background: #555;
}

td {
  height: 20px;
  padding: 0;
  border-right: 1px dashed #ccc;
  border-bottom: 1px dashed #ccc;
  vertical-align: top;
  line-height: 18px;
  white-space: pre;
}

td:first-child {
  padding-left: 8px;
}

td label {
  display: block;
  width: 128px;
  overflow: hidden;
}

td output {
  display: block;
  padding-left: 2px;
}

.muted {
  color: #888;
}

td input[type="text"] {
  display: block;
  width: 137px;
  height: 19px;
  padding: 0 4px;
  border: 1px solid #555;
  background: #fff;
  font: inherit;
  color: inherit;
}

td input[type="checkbox"] {
  display: block;
  width: 14px;
  height: 14px;
  margin: 1px 1px 0;
  border: 1px solid #555;
  background: #fff;
  appearance: none;
}

.edit {
  display: block;
  width: 136px;
  height: 19px;
  border: 1px solid #bbb;
  border-color: #ccc #aaa #aaa #ccc;
  background: #e1e1e1;
}

.vscroll {
  display: flex;
  flex: none;
  flex-direction: column;
  align-items: center;
  width: 17px;
  padding: 3px 0 4px;
  background: #f0f0f0;
}

.vscroll svg,
.chev {
  width: 10px;
  height: 10px;
  fill: none;
  stroke: #444;
  stroke-width: 2;
}

.rail {
  flex: 1;
  align-self: stretch;
  min-height: 0;
  margin: 4px 0;
}

.thumb {
  background: #ccc;
}

.first {
  height: 104px;
}

.second {
  height: 152px;
  margin-top: 192px;
}

.middle {
  height: 17px;
  margin-top: 396px;
}

.apply {
  display: flex;
  justify-content: space-between;
  height: 25px;
  padding: 0 1px 2px;
}

.apply a {
  line-height: 22px;
  color: #1a78c8;
}

.apply button {
  width: 74px;
  background: #ccc;
  color: #888;
}

.browser {
  display: flex;
  flex: 1;
  flex-direction: column;
  min-height: 0;
  margin: 0 -2px;
  padding: 0 2px;
  border-top: 2px solid #ccc;
}

.tree {
  display: flex;
  flex: 1;
  min-height: 0;
  overflow: hidden;
  background: #fff;
}

ul {
  display: flex;
  flex: 1;
  flex-direction: column;
  justify-content: space-between;
  margin: 0 0 -4px 8px;
  padding: 0;
  border-left: 1px dashed #ddd;
  list-style: none;
}

li {
  display: flex;
  align-items: center;
  height: 17px;
  padding-left: 14px;
}

li.child {
  padding-left: 34px;
}

.toggle {
  width: 10px;
  height: 10px;
  border: 1px solid #bbb;
  background: #f4f4f4;
}

.toggle svg {
  width: 8px;
  height: 8px;
  stroke: #3f5ba5;
  stroke-width: 2;
}

li::after {
  content: "";
  order: 1;
  width: 8px;
  border-top: 1px dashed #ddd;
}

.name {
  order: 2;
  padding: 0 1px;
  line-height: 17px;
}

.selected {
  background: #e0e0e0;
}

.view {
  display: flex;
  flex: 1;
  flex-direction: column;
  min-width: 0;
  padding-right: 1px;
  padding-bottom: 2px;
  background: #fff;
}

.doc-tabs {
  display: flex;
  height: 21px;
  margin-right: -1px;
  background: #ccc;
  color: #444;
}

.doc {
  display: flex;
  align-items: center;
  gap: 8px;
  padding-left: 5px;
}

.doc > svg {
  width: 16px;
  height: 16px;
  opacity: .6;
}

.doc.active {
  width: 128px;
  background: #fff;
}

.doc.active > svg {
  opacity: 1;
}

.doc .x {
  margin: 0 4px 0 auto;
}

.list {
  margin: 0 4px 0 auto;
}

.list svg {
  width: 10px;
  height: 10px;
}

.stage {
  display: flex;
  flex: 1;
  min-height: 0;
}

.canvas {
  position: relative;
  flex: 1;
}

.cube {
  position: absolute;
  top: 55px;
  right: 24px;
  width: 132px;
  height: 104px;
  overflow: visible;
}

.face {
  font-weight: 600;
  fill: #999;
}

.compass {
  font-size: 36px;
  font-weight: bold;
  fill: #e0e0e0;
  stroke: #999;
  stroke-width: 2px;
}

.navbar {
  position: absolute;
  top: 173px;
  right: 0;
  display: flex;
  flex-direction: column;
  align-items: center;
  width: 31px;
  height: 107px;
  border: 1px solid #ccc;
  border-radius: 3px;
  background: #f5f5f5;
}

.navbar button svg {
  width: 24px;
  height: 24px;
}

.navbar .drop {
  height: 14px;
}

.navbar .drop::after {
  border-top-color: #888;
}

.navbar hr {
  width: 28px;
  margin: 0 0 2px;
  border: none;
  border-top: 1px solid #ddd;
}

.dot {
  align-self: flex-end;
  width: 10px;
  height: 10px;
  margin-right: 1px;
  fill: #eee;
  stroke: #aaa;
}

.navbar > .dot:first-child {
  margin-bottom: 4px;
}

.navbar > .dot:last-child {
  margin-top: 3px;
}

.view-bar {
  display: flex;
  align-items: center;
  height: 17px;
  margin-left: 2px;
  padding-left: 10px;
  background: #eee;
}

.scale {
  width: 70px;
  text-align: left;
}

.mini {
  width: 16px;
  margin-right: 5px;
}

.mini svg,
.ico {
  width: 16px;
  height: 16px;
}

.first-chev {
  margin-left: 2px;
}

.hrail {
  flex: 1;
  margin-left: 6px;
}

.hthumb {
  width: 17px;
  height: 17px;
  margin-left: 49%;
  background: #ccc;
}

.grip {
  width: 10px;
  height: 10px;
  margin-left: 10px;
}

.status {
  display: flex;
  align-items: center;
  height: 22px;
  padding-top: 2px;
  background: #ccc;
}

.ready {
  flex: 1;
  padding-left: 1px;
}

.worksets {
  display: flex;
  align-items: center;
  gap: 5px;
}

.worksets .picker {
  flex: none;
  width: 203px;
  height: 17px;
  background: #fff;
  color: #888;
}

.worksets .picker svg {
  stroke: #bbb;
}

.selection {
  display: flex;
  align-items: center;
  margin-left: 215px;
  padding-right: 18px;
}

.selection .mini:last-of-type {
  margin-right: 1px;
}

.taskbar {
  height: 3px;
  margin-left: -1px;
  background: #3c3c3c;
}

.taskbar::before {
  content: "";
  display: block;
  width: 48px;
  height: 3px;
  margin-left: 28%;
  background: #666;
}
</style>
